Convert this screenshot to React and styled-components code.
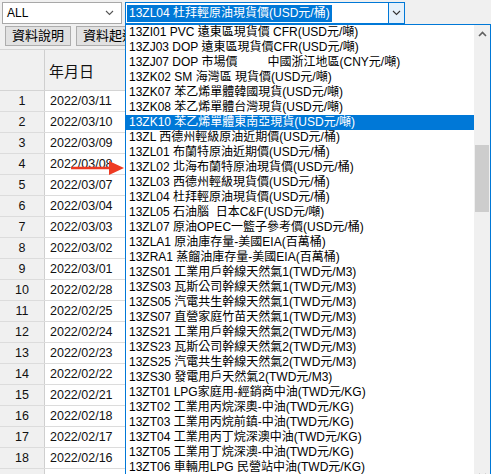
import React from 'react';
import styled, { createGlobalStyle } from 'styled-components';

const GlobalStyle = createGlobalStyle`
  html, body {
    margin: 0;
    padding: 0;
    background: #f0f0f0;
  }
  * { box-sizing: border-box; }
`;

const FONT = `"Liberation Sans", "Noto Sans CJK TC", sans-serif`;

const items = [
  '13ZI01 PVC 遠東區現貨價 CFR(USD元/噸)',
  '13ZJ03 DOP 遠東區現貨價CFR(USD元/噸)',
  '13ZJ07 DOP 市場價         中國浙江地區(CNY元/噸)',
  '13ZK02 SM 海灣區 現貨價(USD元/噸)',
  '13ZK07 苯乙烯單體韓國現貨(USD元/噸)',
  '13ZK08 苯乙烯單體台灣現貨(USD元/噸)',
  '13ZK10 苯乙烯單體東南亞現貨(USD元/噸)',
  '13ZL 西德州輕級原油近期價(USD元/桶)',
  '13ZL01 布蘭特原油近期價(USD元/桶)',
  '13ZL02 北海布蘭特原油現貨價(USD元/桶)',
  '13ZL03 西德州輕級現貨價(USD元/桶)',
  '13ZL04 杜拜輕原油現貨價(USD元/桶)',
  '13ZL05 石油腦  日本C&F(USD元/噸)',
  '13ZL07 原油OPEC一籃子參考價(USD元/桶)',
  '13ZLA1 原油庫存量-美國EIA(百萬桶)',
  '13ZRA1 蒸餾油庫存量-美國EIA(百萬桶)',
  '13ZS01 工業用戶幹線天然氣1(TWD元/M3)',
  '13ZS03 瓦斯公司幹線天然氣1(TWD元/M3)',
  '13ZS05 汽電共生幹線天然氣1(TWD元/M3)',
  '13ZS07 直營家庭竹苗天然氣1(TWD元/M3)',
  '13ZS21 工業用戶幹線天然氣2(TWD元/M3)',
  '13ZS23 瓦斯公司幹線天然氣2(TWD元/M3)',
  '13ZS25 汽電共生幹線天然氣2(TWD元/M3)',
  '13ZS30 發電用戶天然氣2(TWD元/M3)',
  '13ZT01 LPG家庭用-經銷商中油(TWD元/KG)',
  '13ZT02 工業用丙烷深奧-中油(TWD元/KG)',
  '13ZT03 工業用丙烷前鎮-中油(TWD元/KG)',
  '13ZT04 工業用丙丁烷深澳中油(TWD元/KG)',
  '13ZT05 工業用丁烷深澳-中油(TWD元/KG)',
  '13ZT06 車輛用LPG 民營站中油(TWD元/KG)',
];

const dates = [
  '2022/03/11', '2022/03/10', '2022/03/09', '2022/03/08', '2022/03/07',
  '2022/03/04', '2022/03/03', '2022/03/02', '2022/03/01', '2022/02/28',
  '2022/02/25', '2022/02/24', '2022/02/23', '2022/02/22', '2022/02/21',
  '2022/02/18', '2022/02/17', '2022/02/16', '2022/02/15',
];

const Chevron = ({ up, color = '#555' }) => (
  <svg width="9" height="6" viewBox="0 0 9 6">
    <polyline
      points={up ? '1,5 4.5,1.5 8,5' : '1,1 4.5,4.5 8,1'}
      fill="none"
      stroke={color}
      strokeWidth={up ? 1.6 : 1.1}
    />
  </svg>
);

function App() {
  return (
    <Page>
      <GlobalStyle />
      <TopBar>
        <Combo width={120}>
          <ComboText>ALL</ComboText>
          <ComboArrow><Chevron /></ComboArrow>
        </Combo>
        <Combo width={280} focused>
          <Selected>13ZL04 杜拜輕原油現貨價(USD元/桶)</Selected>
          <DropBtn><Chevron color="#333" /></DropBtn>
        </Combo>
      </TopBar>

      <ButtonRow>
        <Button>資料說明</Button>
        <Button>資料起迄</Button>
      </ButtonRow>

      <Grid>
        <HeaderRow>
          <NumCell header />
          <DateCell header>年月日</DateCell>
          <DateCell header />
        </HeaderRow>
        {dates.map((d, i) => (
          <Row key={d}>
            <NumCell>{i + 1}</NumCell>
            <DateCell>{d}</DateCell>
            <DateCell />
          </Row>
        ))}
      </Grid>

      <DropList>
        <Items>
          {items.map((t) => (
            <Item key={t} active={t.startsWith('13ZK10')}>{t}</Item>
          ))}
        </Items>
        <ScrollBar>
          <ScrollBtn><Chevron up color="#606060" /></ScrollBtn>
          <Track>
            <Thumb />
          </Track>
          <ScrollBtn><Chevron color="#606060" /></ScrollBtn>
        </ScrollBar>
      </DropList>

      <Arrow width="56" height="16" viewBox="0 0 56 16">
        <line x1="0" y1="8" x2="40" y2="8" stroke="#ee3a22" strokeWidth="2.6" />
        <polygon points="38,1 53,8 38,15" fill="#ee3a22" />
      </Arrow>
    </Page>
  );
}

const Page = styled.div`
  position: relative;
  width: 491px;
  height: 474px;
  overflow: hidden;
  background: #f0f0f0;
  font-family: ${FONT};
`;

const TopBar = styled.div`
  display: flex;
  gap: 3px;
  padding: 2px 0 0 2px;
`;

const Combo = styled.div`
  display: flex;
  align-items: center;
  width: ${(p) => p.width}px;
  height: 22px;
  padding: 1px;
  background: #fff;
  border: 1px solid ${(p) => (p.focused ? '#0078d7' : '#a8a8a8')};
`;

const ComboText = styled.span`
  flex: 1;
  padding-left: 3px;
  font-size: 12px;
  color: #000;
`;

const ComboArrow = styled.span`
  display: flex;
  width: 16px;
  justify-content: center;
  margin-right: 3px;
`;

const Selected = styled.span`
  height: 17px;
  line-height: 17px;
  padding: 0 2px;
  background: #0078d7;
  color: #fff;
  font-size: 12px;
  white-space: nowrap;
  margin-right: auto;
`;

const DropBtn = styled.span`
  display: flex;
  align-items: center;
  justify-content: center;
  width: 16px;
  height: 20px;
  margin: -1px -1px -1px 0;
  background: #e5f1fb;
  border-left: 1px solid #0078d7;
`;

const ButtonRow = styled.div`
  display: flex;
  gap: 5px;
  padding: 2px 0 0 5px;
`;

const Button = styled.button`
  height: 20px;
  padding: 0 6px;
  border: 1px solid #adadad;
  background: #e1e1e1;
  font-family: ${FONT};
  font-size: 13px;
  color: #000;
  line-height: 18px;
`;

const Grid = styled.div`
  margin-top: 3px;
  background: #fff;
  border-top: 1px solid #d4d4d4;
`;

const HeaderRow = styled.div`
  display: grid;
  grid-template-columns: 45px 90px 1fr;
  height: 41px;
  border-bottom: 1px solid #d4d4d4;
  background: #f0f0f0;
`;

const Row = styled.div`
  display: grid;
  grid-template-columns: 45px 90px 1fr;
  height: 21px;
  border-bottom: 1px solid #dcdcdc;
`;

const NumCell = styled.div`
  display: flex;
  align-items: center;
  justify-content: center;
  background: #f0f0f0;
  border-right: 1px solid #cfcfcf;
  font-size: 12.5px;
  color: #111;
`;

const DateCell = styled.div`
  display: flex;
  align-items: center;
  padding-left: ${(p) => (p.header ? 4 : 5)}px;
  border-right: 1px solid #dcdcdc;
  font-size: ${(p) => (p.header ? 15 : 12.5)}px;
  color: #111;
  background: ${(p) => (p.header ? '#f0f0f0' : '#fff')};
`;

const DropList = styled.div`
  position: absolute;
  left: 125px;
  top: 24px;
  width: 366px;
  height: 460px;
  display: flex;
  background: #fff;
  border: 1px solid #0078d7;
  border-bottom: none;
`;

const Items = styled.div`
  flex: 1;
  display: flex;
  flex-direction: column;
`;

const Item = styled.div`
  height: 15px;
  line-height: 15px;
  padding-left: 3px;
  font-size: 12px;
  white-space: pre;
  color: ${(p) => (p.active ? '#fff' : '#000')};
  background: ${(p) => (p.active ? '#0078d7' : 'transparent')};
`;

const ScrollBar = styled.div`
  width: 16px;
  display: flex;
  flex-direction: column;
  background: #f0f0f0;
`;

const ScrollBtn = styled.div`
  height: 17px;
  display: flex;
  align-items: center;
  justify-content: center;
`;

const Track = styled.div`
  flex: 1;
  display: flex;
  flex-direction: column;
`;

const Thumb = styled.div`
  margin: 103px 1px 0 1px;
  height: 67px;
  background: #cdcdcd;
`;

const Arrow = styled.svg`
  position: absolute;
  left: 71px;
  top: 160px;
`;

export default App;
